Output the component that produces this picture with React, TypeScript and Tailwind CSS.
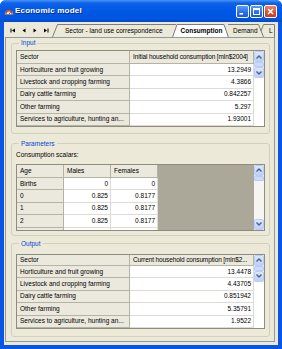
import React from 'react';

// Economic model window, XP Luna look
const inputRows: [string, string][] = [
  ['Horticulture and fruit growing', '13.2949'],
  ['Livestock and cropping farming', '4.3866'],
  ['Dairy cattle farming', '0.842257'],
  ['Other farming', '5.297'],
  ['Services to agriculture, hunting an...', '1.93001'],
];

const outputRows: [string, string][] = [
  ['Horticulture and fruit growing', '13.4478'],
  ['Livestock and cropping farming', '4.43705'],
  ['Dairy cattle farming', '0.851942'],
  ['Other farming', '5.35791'],
  ['Services to agriculture, hunting an...', '1.9522'],
];

// last row is only a sliver in view, so it is left blank
const scalarRows: [string, string, string][] = [
  ['Births', '0', '0'],
  ['0', '0.825', '0.8177'],
  ['1', '0.825', '0.8177'],
  ['2', '0.825', '0.8177'],
  ['', '', ''],
];

const Arrow = ({ up }: { up?: boolean }) => (
  <div className="h-[11px] w-full rounded-[2px] border border-[#BCCDF5] bg-[linear-gradient(to_bottom,#DCE6FE,#BDD0FA)] flex items-center justify-center shrink-0">
    <svg width="8" height="6" viewBox="0 0 8 6">
      <polyline
        points={up ? '1.5,4.5 4,2 6.5,4.5' : '1.5,1.5 4,4 6.5,1.5'}
        fill="none"
        stroke="#4D6185"
        strokeWidth="1.4"
      />
    </svg>
  </div>
);

const ScrollBar = () => (
  <div className="w-[10px] h-full flex flex-col bg-[#F6F5EF]">
    <Arrow up />
    <div className="h-[5px] shrink-0 rounded-[1px] border border-[#BCCDF5] bg-[#CCDAFC]" />
    <div className="flex-1" />
    <Arrow />
  </div>
);

const Fixed = ({ children, w }: { children: React.ReactNode; w: string }) => (
  <div className={`${w} h-full shrink-0 flex items-center pl-[3px] bg-[#EBE9DD] border-r border-b border-[#B5B3A6] whitespace-nowrap overflow-hidden`}>
    {children}
  </div>
);

const Data = ({ children, w = 'flex-1' }: { children: React.ReactNode; w?: string }) => (
  <div className={`${w} h-full flex items-center justify-end pr-[2px] bg-white border-r border-b border-[#DCDBD5] whitespace-nowrap`}>
    {children}
  </div>
);

const SectorGrid = ({ head, rows, headH }: { head: string; rows: [string, string][]; headH: string }) => (
  <div className="flex border border-[#8E8C80] bg-white">
    <div className="flex-1 flex flex-col">
      <div className={`flex ${headH}`}>
        <Fixed w="w-[113px]">Sector</Fixed>
        <div className="flex-1 h-full flex items-center pl-[3px] bg-[#EBE9DD] border-r border-b border-[#B5B3A6] whitespace-nowrap overflow-hidden tracking-[-0.12px]">
          {head}
        </div>
      </div>
      {rows.map(([name, v]) => (
        <div key={name} className="flex h-[12.4px]">
          <Fixed w="w-[113px]">{name}</Fixed>
          <Data>{v}</Data>
        </div>
      ))}
    </div>
    <ScrollBar />
  </div>
);

const Group = ({ title, className = '', children }: { title: string; className?: string; children: React.ReactNode }) => (
  <fieldset className={`border border-[#D0D0BF] rounded-[3px] px-[4px] ${className}`}>
    <legend className="ml-[3px] px-[2px] leading-[8px] text-[#0046D5]">{title}</legend>
    {children}
  </fieldset>
);

const NavGlyph = ({ kind }: { kind: 'first' | 'prev' | 'next' | 'last' }) => (
  <div className="w-[11px] flex items-center justify-center">
    <svg width="6" height="5" viewBox="0 0 6 5">
      {kind === 'first' && (<><rect x="0.5" y="0.5" width="1" height="4" fill="#000" /><polygon points="5,0.5 2,2.5 5,4.5" fill="#000" /></>)}
      {kind === 'prev' && <polygon points="4.5,0.5 1.5,2.5 4.5,4.5" fill="#000" />}
      {kind === 'next' && <polygon points="1.5,0.5 4.5,2.5 1.5,4.5" fill="#000" />}
      {kind === 'last' && (<><polygon points="1,0.5 4,2.5 1,4.5" fill="#000" /><rect x="4.5" y="0.5" width="1" height="4" fill="#000" /></>)}
    </svg>
  </div>
);

const TitleButton = ({ kind }: { kind: 'min' | 'max' | 'close' }) => (
  <div
    className={`w-[13px] h-[13px] rounded-[2px] border border-white flex items-center justify-center ${
      kind === 'close'
        ? 'bg-[linear-gradient(to_bottom,#EE8466,#D8502B_60%,#C4401C)]'
        : 'bg-[linear-gradient(to_bottom,#5C9BFB,#2B6DEA_60%,#1F5AD8)]'
    }`}
  >
    <svg width="9" height="9" viewBox="0 0 9 9">
      {kind === 'min' && <rect x="1.5" y="6" width="3.5" height="1.6" fill="#fff" />}
      {kind === 'max' && (<><rect x="1.5" y="1.5" width="6" height="6" fill="none" stroke="#fff" strokeWidth="1" /><rect x="1.5" y="1.5" width="6" height="1.5" fill="#fff" /></>)}
      {kind === 'close' && <path d="M2 2 L7 7 M7 2 L2 7" stroke="#fff" strokeWidth="1.5" />}
    </svg>
  </div>
);

export default function App() {
  return (
    <div className="w-[282px] h-[349px] bg-white font-['Liberation_Sans',Arial,sans-serif] text-[6.5px] leading-[8px] text-black">
      <div className="h-full flex flex-col rounded-t-[6px] bg-[#0A56E4] overflow-hidden">
        {/* Title bar */}
        <div className="h-[22px] shrink-0 flex items-center pl-[4px] pr-[5px] bg-[linear-gradient(to_bottom,#4796F8_0%,#0F62E9_14%,#0058E6_50%,#0055E0_85%,#0049CC_100%)]">
          <svg width="10" height="8" viewBox="0 0 10 8" className="shrink-0">
            <path d="M0.8 7.5 A4.2 4.2 0 0 1 9.2 7.5 Z" fill="#F2EFE6" stroke="#8B6B4A" strokeWidth="0.6" />
            <path d="M2 6.8 A3 3 0 0 1 8 6.8" fill="none" stroke="#E0402A" strokeWidth="1.6" />
            <path d="M5 7 L7 4.6" stroke="#333" strokeWidth="0.7" />
          </svg>
          <span className="ml-[1px] text-[8px] font-bold text-white tracking-[0.2px] [text-shadow:1px_1px_0_#0A2E8C]">Economic model</span>
          <div className="ml-auto flex gap-[1px]">
            <TitleButton kind="min" />
            <TitleButton kind="max" />
            <TitleButton kind="close" />
          </div>
        </div>

        {/* Client area */}
        <div className="flex-1 mx-[4px] mb-[4px] bg-[#ECE9D8] flex flex-col">
          {/* Tab strip */}
          <div className="h-[15px] shrink-0 flex">
            <div className="w-[48px] flex pl-[3px] pt-[1px]">
              <NavGlyph kind="first" />
              <NavGlyph kind="prev" />
              <NavGlyph kind="next" />
              <NavGlyph kind="last" />
            </div>
            <div className="relative w-[223px] flex">
              <svg className="absolute inset-0" width="223" height="15" viewBox="0 0 223 15">
                <path d="M0.5 15 L5.5 2.5 L124 2.5" fill="none" stroke="#7E7D74" strokeWidth="1" />
                <path d="M176 2.5 L206.5 2.5 L211.5 15" fill="none" stroke="#7E7D74" strokeWidth="1" />
                <path d="M209 9 L211.5 2.5 L222.5 2.5 L222.5 15" fill="none" stroke="#7E7D74" strokeWidth="1" />
                <path d="M120.5 15.5 L125 2.5 L172 2.5 L176.5 15.5 Z" fill="#FFFFFF" stroke="#7E7D74" strokeWidth="1" />
              </svg>
              <div className="relative w-[124px] flex items-center pl-[13px] pt-[2px] whitespace-nowrap">Sector - land use correspondence</div>
              <div className="relative w-[51px] flex items-center justify-center pt-[2px] font-bold whitespace-nowrap">Consumption</div>
              <div className="relative w-[36px] flex items-center pl-[6px] pt-[2px] whitespace-nowrap">Demand</div>
              <div className="relative w-[12px] flex items-center pl-[6px] pt-[2px]">L</div>
            </div>
          </div>

          {/* Tab page */}
          <div className="flex-1 ml-[1px] mr-[3px] mb-[3px] border border-[#919B9C] bg-[#ECE9D8] pl-[5px] pr-[4px] flex flex-col">
            <Group title="Input" className="mt-[1px] pt-[3px] pb-[6px]">
              <SectorGrid head="Initial household consumption [mln$2004]" rows={inputRows} headH="h-[13px]" />
            </Group>

            <Group title="Parameters" className="mt-[6px] pt-[3px] pb-[4px]">
              <div className="h-[8px]">Consumption scalars:</div>
              <div className="mt-[5px] h-[67px] flex border border-[#8E8C80] overflow-hidden">
                <div className="flex flex-col">
                  <div className="flex h-[13px] shrink-0">
                    <Fixed w="w-[47px]">Age</Fixed>
                    <Fixed w="w-[47px]">Males</Fixed>
                    <Fixed w="w-[47px]">Females</Fixed>
                  </div>
                  {scalarRows.map(([age, m, f], i) => (
                    <div key={i} className="flex h-[12.4px] shrink-0">
                      <Fixed w="w-[47px]">{age}</Fixed>
                      <Data w="w-[47px]">{m}</Data>
                      <Data w="w-[47px]">{f}</Data>
                    </div>
                  ))}
                </div>
                <div className="flex-1 bg-[#ABA899]" />
                <ScrollBar />
              </div>
            </Group>

            <Group title="Output" className="mt-[4px] mb-[4px] pt-[6px] flex-1">
              <SectorGrid head="Current household consumption [mln$2..." rows={outputRows} headH="h-[11px]" />
            </Group>
          </div>
        </div>
      </div>
    </div>
  );
}
